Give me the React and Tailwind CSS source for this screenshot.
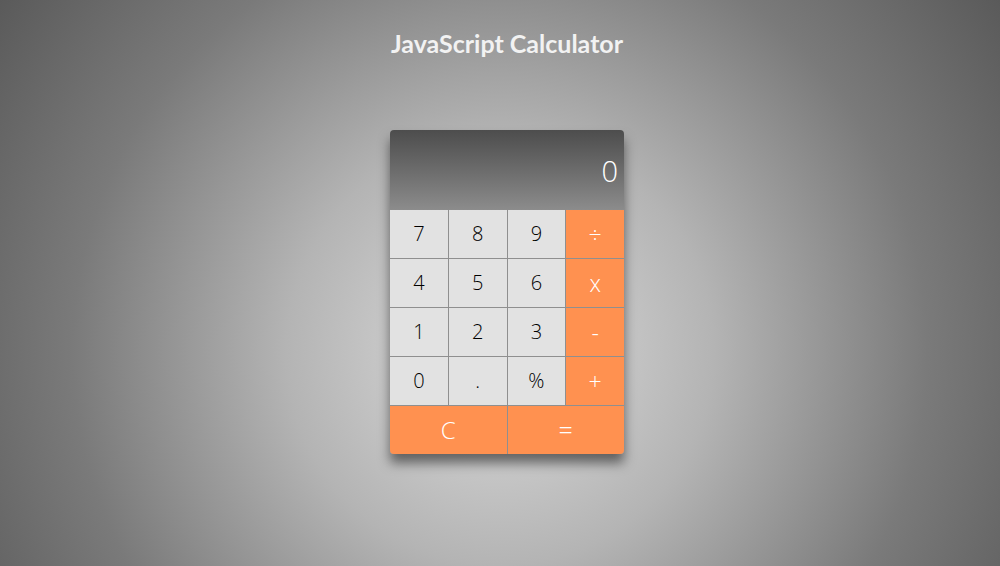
import React, { useState } from "react";

const keys = [
  ["7", "light"], ["8", "light"], ["9", "light"], ["÷", "op"],
  ["4", "light"], ["5", "light"], ["6", "light"], ["x", "op"],
  ["1", "light"], ["2", "light"], ["3", "light"], ["-", "op"],
  ["0", "light"], [".", "light"], ["%", "light"], ["+", "op"],
];

export default function App() {
  const [display] = useState("0");

  return (
    <div className="h-[566px] w-full overflow-hidden bg-[radial-gradient(circle_at_50%_62%,#dcdcdc_0%,#b4b4b4_35%,#7a7a7a_70%,#5a5a5a_100%)] flex flex-col items-center pl-[14px] font-['Lato',sans-serif]">
      <h1 className="mt-[28px] text-[25px] font-bold text-[#f2f2f2] leading-[30px]">JavaScript Calculator</h1>

      <div className="mt-[72px] w-[234px] rounded-[4px] overflow-hidden shadow-[0_9px_12px_rgba(0,0,0,0.5)] font-['Open_Sans',sans-serif] font-light">
        {/* Display */}
        <div className="h-[80px] bg-gradient-to-b from-[#4d4d4d] to-[#8c8c8c] flex items-center justify-end pr-[6px] pt-[2px]">
          <span className="text-[29px] text-white">{display}</span>
        </div>

        {/* Keys */}
        <div className="grid grid-cols-4 bg-[#8f8f8f] gap-px">
          {keys.map(([k, t]) => (
            <button
              key={k}
              className={`h-[48px] flex items-center justify-center ${
                t === "op" ? "bg-[#ff9150] text-white text-[23px]" : "bg-[#e2e2e2] text-black text-[20px]"
              }`}
            >
              {k}
            </button>
          ))}
          <button className="col-span-2 h-[48px] flex items-center justify-center text-[24px] bg-[#ff9150] text-white">C</button>
          <button className="col-span-2 h-[48px] flex items-center justify-center text-[25px] bg-[#ff9150] text-white">=</button>
        </div>
      </div>
    </div>
  );
}
